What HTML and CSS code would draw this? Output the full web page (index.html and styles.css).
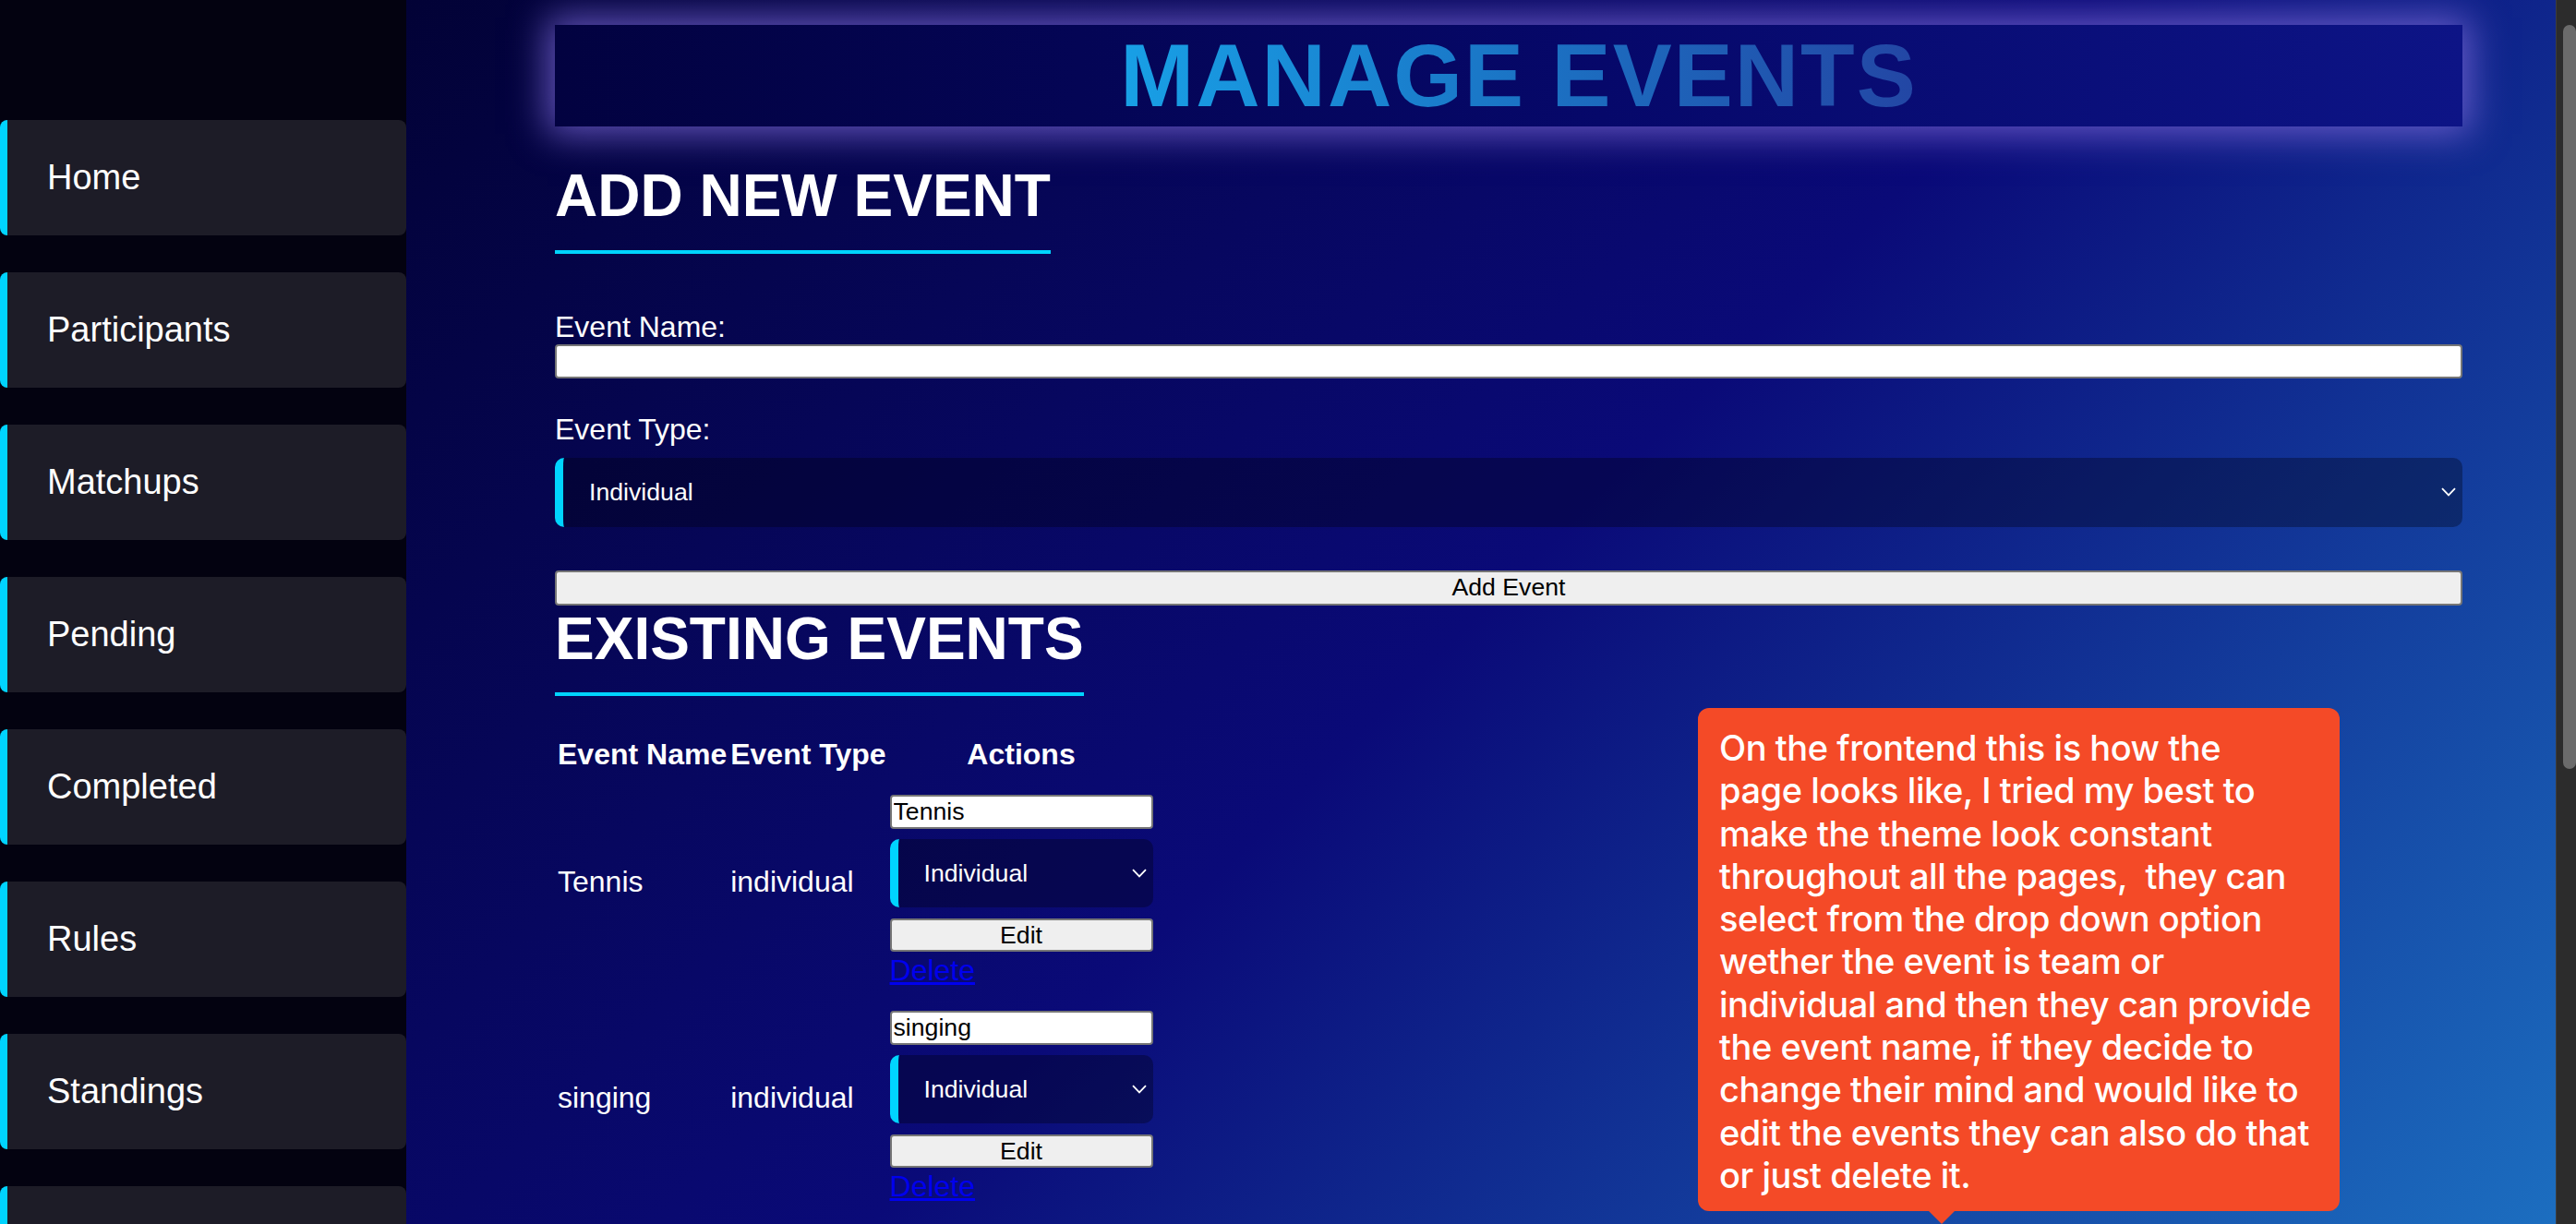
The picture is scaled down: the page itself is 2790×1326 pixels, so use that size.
FILE: index.html
```html
<!DOCTYPE html>
<html lang="en">
<head>
<meta charset="utf-8">
<title>Manage Events</title>
<link rel="stylesheet" href="styles.css">
</head>
<body>
<nav class="sidebar">
  <a class="nav-item" href="#">Home</a>
  <a class="nav-item" href="#">Participants</a>
  <a class="nav-item" href="#">Matchups</a>
  <a class="nav-item" href="#">Pending</a>
  <a class="nav-item" href="#">Completed</a>
  <a class="nav-item" href="#">Rules</a>
  <a class="nav-item" href="#">Standings</a>
  <a class="nav-item" href="#" aria-label="More"></a>
</nav>

<main class="main">
  <h1 class="page-title"><span class="title-text">MANAGE EVENTS</span></h1>

  <h2 class="section-title first">ADD NEW EVENT</h2>
  <form class="add-form">
    <label class="field-label name-label" for="event-name">Event Name:</label>
    <input id="event-name" class="text-input wide" type="text">
    <label class="field-label type-label" for="event-type">Event Type:</label>
    <div class="select-wrap big">
      <select id="event-type" class="select">
        <option>Individual</option>
        <option>Team</option>
      </select>
      <svg class="chevron" width="16" height="10" viewBox="0 0 16 10"><path d="M1 1.2 L8 8.4 L15 1.2" fill="none" stroke="#ffffff" stroke-width="1.8"/></svg>
    </div>
    <button class="btn add-btn" type="button">Add Event</button>
  </form>

  <h2 class="section-title">EXISTING EVENTS</h2>
  <table class="events-table">
    <thead>
      <tr><th>Event Name</th><th>Event Type</th><th>Actions</th></tr>
    </thead>
    <tbody>
      <tr>
        <td>Tennis</td>
        <td>individual</td>
        <td class="actions-cell">
          <div class="actions">
            <input class="text-input small" type="text" value="Tennis">
            <div class="select-wrap small">
              <select class="select">
                <option>Individual</option>
                <option>Team</option>
              </select>
              <svg class="chevron" width="16" height="10" viewBox="0 0 16 10"><path d="M1 1.2 L8 8.4 L15 1.2" fill="none" stroke="#ffffff" stroke-width="1.8"/></svg>
            </div>
            <button class="btn edit-btn" type="button">Edit</button>
          </div>
          <a class="delete-link" href="#">Delete</a>
        </td>
      </tr>
      <tr>
        <td>singing</td>
        <td>individual</td>
        <td class="actions-cell">
          <div class="actions">
            <input class="text-input small" type="text" value="singing">
            <div class="select-wrap small">
              <select class="select">
                <option>Individual</option>
                <option>Team</option>
              </select>
              <svg class="chevron" width="16" height="10" viewBox="0 0 16 10"><path d="M1 1.2 L8 8.4 L15 1.2" fill="none" stroke="#ffffff" stroke-width="1.8"/></svg>
            </div>
            <button class="btn edit-btn" type="button">Edit</button>
          </div>
          <a class="delete-link" href="#">Delete</a>
        </td>
      </tr>
    </tbody>
  </table>

  <div class="tooltip">
    <p class="tooltip-text">On the frontend this is how the<br>page looks like, I tried my best to<br>make the theme look constant<br>throughout all the pages,&nbsp; they can<br>select from the drop down option<br>wether the event is team or<br>individual and then they can provide<br>the event name, if they decide to<br>change their mind and would like to<br>edit the events they can also do that<br>or just delete it.</p>
    <span class="tooltip-arrow"></span>
  </div>
</main>

<div class="scrollbar"><div class="scroll-thumb"></div></div>
</body>
</html>
```

FILE: styles.css
```css
* {
  box-sizing: border-box;
}

html,
body {
  margin: 0;
  height: 1326px;
  overflow: hidden;
}

body {
  display: flex;
  font-family: "Liberation Sans", Arial, Helvetica, sans-serif;
  background: #030210;
}

/* ---------- sidebar ---------- */
.sidebar {
  width: 440px;
  flex: none;
  background: #030210;
  padding-top: 130px;
  display: flex;
  flex-direction: column;
  gap: 40px;
}

.nav-item {
  flex: none;
  height: 125px;
  display: flex;
  align-items: center;
  padding-left: 43px;
  background: #1d1c27;
  border-left: 8px solid #00d4ff;
  border-radius: 8px;
  color: #ffffff;
  font-size: 38px;
  text-decoration: none;
}

/* ---------- main ---------- */
.main {
  flex: 1;
  position: relative;
  padding: 27px 101px 0 161px;
  color: #ffffff;
  background: linear-gradient(135deg, #020236 0%, #0a0a78 50%, #1c6ec0 100%);
}

.page-title {
  margin: 0;
  height: 110px;
  padding-left: 22px;
  font-size: 96px;
  line-height: 110px;
  font-weight: bold;
  letter-spacing: 2px;
  text-align: center;
  background: linear-gradient(90deg, #020240 0%, #06086a 55%, #0d1486 100%);
  box-shadow: 0 0 38px 8px rgba(122, 104, 215, 0.8);
}

.title-text {
  background: linear-gradient(90deg, #18a0e6 0%, #1a78c8 45%, #2346a4 100%);
  -webkit-background-clip: text;
  background-clip: text;
  color: transparent;
}

.section-title {
  width: fit-content;
  margin: 0;
  font-size: 64px;
  font-weight: bold;
  line-height: 73.5px;
  padding-bottom: 21px;
  border-bottom: 4px solid #00d4ff;
}

.section-title.first {
  margin-top: 39px;
}

/* ---------- add form ---------- */
.add-form {
  display: flex;
  flex-direction: column;
  margin: 0;
}

.field-label {
  display: block;
  font-size: 32px;
  line-height: 37px;
}

.name-label {
  margin-top: 61px;
}

.type-label {
  margin-top: 37px;
}

.text-input {
  display: block;
  height: 37px;
  margin: 0;
  padding: 0 2px;
  background: #ffffff;
  border: 2px solid #767676;
  border-radius: 4px;
  font-family: "Liberation Sans", Arial, sans-serif;
  font-size: 26.67px;
  color: #000000;
}

.text-input.wide {
  width: 100%;
}

.select-wrap {
  position: relative;
  display: block;
}

.select-wrap.big {
  margin-top: 12px;
  height: 75px;
}

.select-wrap.small {
  width: 285px;
  height: 74px;
}

.select {
  display: block;
  width: 100%;
  height: 100%;
  margin: 0;
  padding: 0 40px 0 28px;
  -webkit-appearance: none;
  appearance: none;
  background: rgba(0, 0, 12, 0.33);
  border: none;
  border-left: 9px solid #00d4ff;
  border-radius: 10px;
  color: #ffffff;
  font-family: "Liberation Sans", Arial, sans-serif;
  font-size: 26.67px;
}

.chevron {
  position: absolute;
  right: 7px;
  top: 50%;
  margin-top: -5px;
}

.btn {
  display: block;
  margin: 0;
  background: #efefef;
  border: 2px solid #767676;
  border-radius: 4px;
  color: #000000;
  font-family: "Liberation Sans", Arial, sans-serif;
  font-size: 26.67px;
  padding: 0;
}

.add-btn {
  width: 100%;
  height: 38px;
  margin-top: 47px;
}

/* ---------- table ---------- */
.events-table {
  margin-top: 42px;
  border-spacing: 2px;
  color: #ffffff;
  font-size: 32px;
}

.events-table th,
.events-table td {
  padding: 1px;
  line-height: 37px;
}

.events-table th {
  font-weight: bold;
  text-align: center;
}

.events-table td {
  vertical-align: middle;
}

.actions {
  display: flex;
  flex-direction: column;
  gap: 11px;
  padding-top: 21px;
}

.text-input.small {
  width: 285px;
}

.edit-btn {
  width: 285px;
  height: 36px;
  margin-top: 1px;
}

.delete-link {
  display: block;
  margin-top: 2px;
  color: #0000ee;
  text-decoration: underline;
  font-size: 32px;
  line-height: 37px;
}

/* ---------- tooltip ---------- */
.tooltip {
  position: absolute;
  left: 1399px;
  top: 767px;
  width: 695px;
  height: 545px;
  padding: 20px 0 0 23px;
  background: #f44a27;
  border-radius: 12px;
}

.tooltip-text {
  margin: 0;
  font-family: Inter, "Noto Sans", sans-serif;
  font-weight: 500;
  font-size: 38px;
  line-height: 46.3px;
  letter-spacing: -0.45px;
  color: #ffffff;
  white-space: nowrap;
}

.tooltip-arrow {
  position: absolute;
  left: 250px;
  bottom: -14px;
  width: 0;
  height: 0;
  border-left: 14px solid transparent;
  border-right: 14px solid transparent;
  border-top: 14px solid #f44a27;
}

/* ---------- scrollbar ---------- */
.scrollbar {
  width: 22px;
  flex: none;
  background: #2c2c2c;
  border-left: 1px solid #3d3d3d;
  padding: 27px 0 0 7px;
}

.scroll-thumb {
  width: 14px;
  height: 806px;
  background: #6b6b6b;
  border-radius: 7px;
}
```
